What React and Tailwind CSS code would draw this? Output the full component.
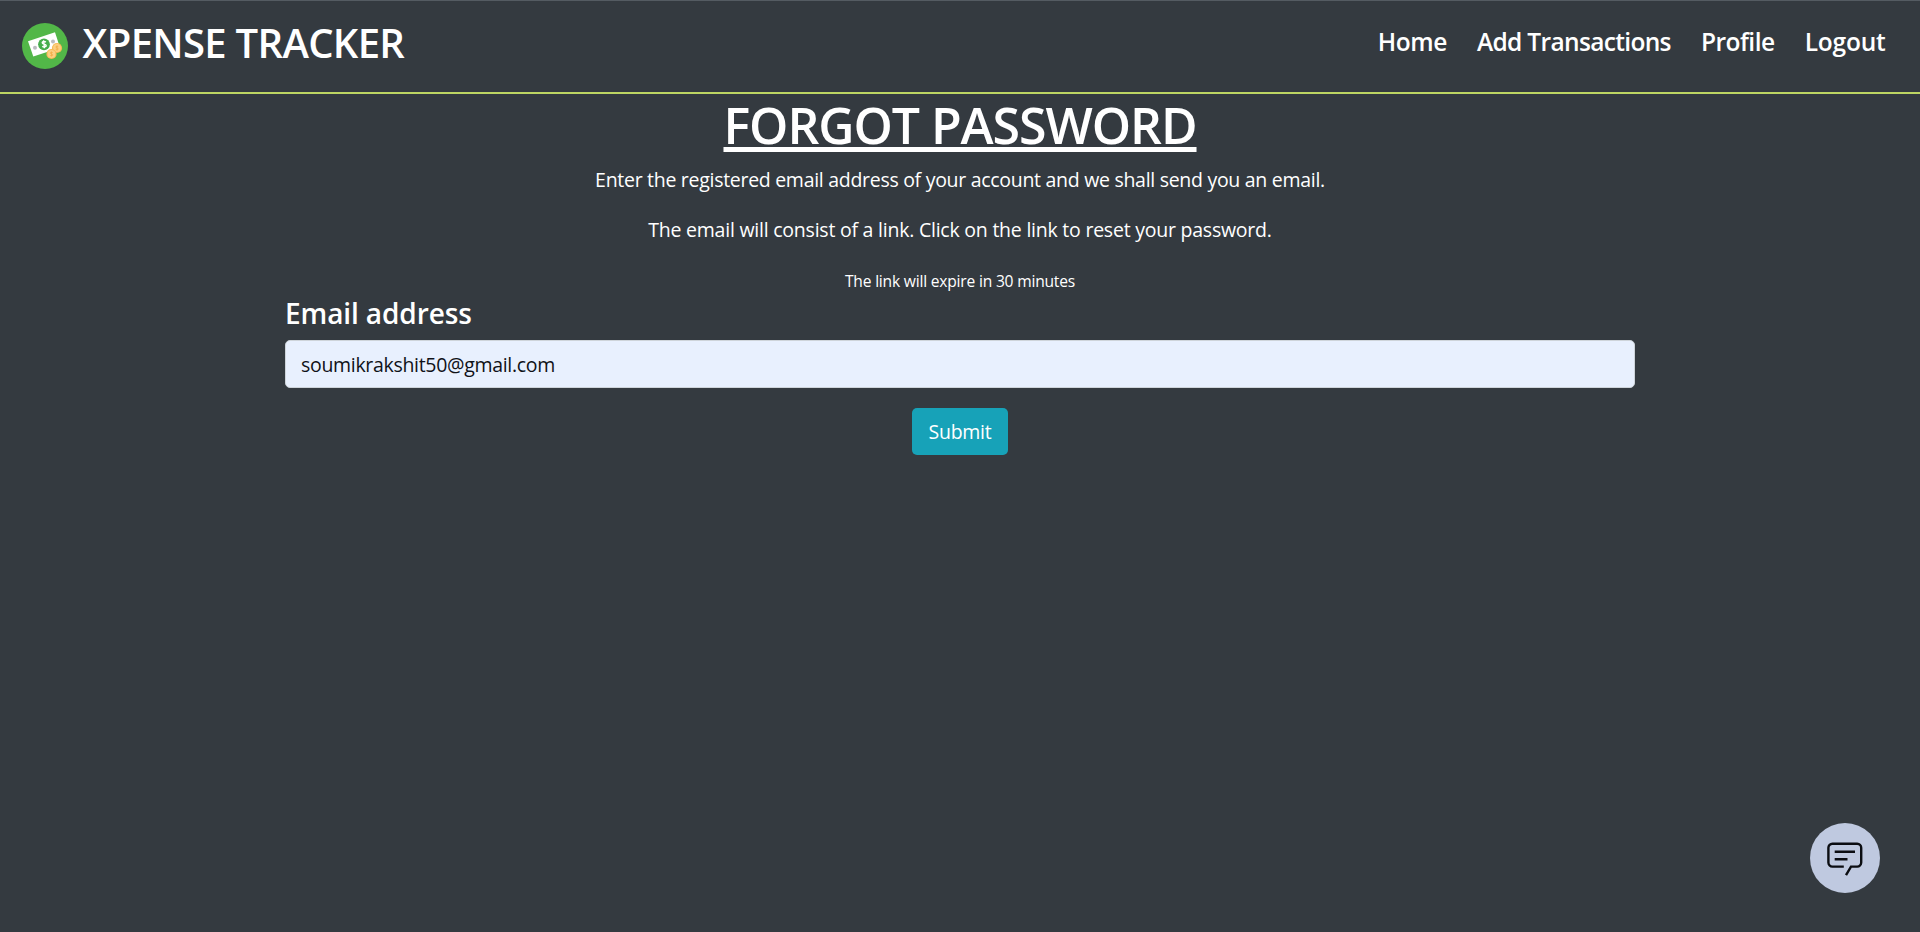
import React from "react";

const NAV = [
  { label: "Home", cls: "tracking-[-0.4px]" },
  { label: "Add Transactions", cls: "tracking-[-0.66px]" },
  { label: "Profile", cls: "tracking-[-0.5px]" },
  { label: "Logout", cls: "tracking-[-0.2px]" },
];

function Coin({ cx, cy }) {
  return (
    <g>
      <circle cx={cx} cy={cy} r="5.1" fill="#f7b955" />
      <circle cx={cx} cy={cy} r="3.9" fill="#fbd083" />
      <path
        d={`M${cx + 1.3} ${cy - 1.3}c-.8-.8-2.6-.6-2.6.3 0 1.2 2.7.8 2.7 2 0 1-2 1.1-2.8.3M${cx} ${cy - 2.4}v4.8`}
        fill="none"
        stroke="#f0a43a"
        strokeWidth="0.6"
      />
    </g>
  );
}

function Logo() {
  return (
    <svg width="46" height="46" viewBox="0 0 46 46" aria-hidden="true">
      <circle cx="23" cy="23" r="23" fill="#52b748" />
      <path d="M6 18.3 33 9.2 38 24.7 11.3 33.6Z" fill="#fff" />
      <circle cx="13" cy="24.8" r="2" fill="#b9bcc0" />
      <circle cx="31" cy="18.4" r="2" fill="#b9bcc0" />
      <circle cx="22" cy="21.3" r="5.9" fill="#45ad4c" />
      <path
        d="M23.8 19.2c-1-1.2-3.7-.8-3.6.6.1 1.8 3.8 1 4 2.8.1 1.5-2.7 1.8-3.9.6M21.6 17.3l.8 8"
        fill="none"
        stroke="#fff"
        strokeWidth="1.4"
      />
      <Coin cx={35} cy={25} />
      <Coin cx={29.5} cy={31} />
    </svg>
  );
}

function ChatIcon() {
  return (
    <svg
      width="36"
      height="34"
      viewBox="0 0 36 34"
      fill="none"
      stroke="#0b0d12"
      strokeWidth="2.4"
      className="overflow-visible"
      aria-hidden="true"
    >
      <path d="M16.800 25.600H5.400a4 4 0 0 1-4-4V6.800a4 4 0 0 1 4-4h24.800a4 4 0 0 1 4 4v14.800a4 4 0 0 1-4 4H24l-5 8.600" />
      <path d="M7.700 10.700H28M7.700 18.300H20.500" />
    </svg>
  );
}

export default function App() {
  return (
    <div className="relative flex h-[932px] w-full flex-col overflow-hidden bg-[#343a40] font-['Open_Sans','Noto_Sans',sans-serif] text-white">
      <header className="flex h-[94px] shrink-0 items-start justify-between border-t border-b-2 border-t-[#545b62] border-b-[#bdd563] pr-[34.5px] pl-[22px]">
        <div className="flex items-start pt-[11px]">
          <span className="mt-[11px] block">
            <Logo />
          </span>
          <span className="ml-[14.5px] text-[40px] leading-[61px] font-semibold tracking-[-0.68px]">XPENSE TRACKER</span>
        </div>
        <nav className="flex gap-[30px] pt-[21px] text-[24.5px] leading-10 font-semibold">
          {NAV.map((n) => (
            <a key={n.label} className={n.cls}>
              {n.label}
            </a>
          ))}
        </nav>
      </header>

      <main className="mx-auto flex w-[1350px] flex-col items-center pt-px">
        <h1 className="text-[50px] leading-[60px] font-semibold tracking-[-1.05px] underline decoration-[5px] underline-offset-[3px]">
          FORGOT PASSWORD
        </h1>
        <p className="mt-2.5 text-[19.5px] leading-[30px] tracking-[-0.29px]">
          Enter the registered email address of your account and we shall send you an email.
        </p>
        <p className="mt-5 text-[19.5px] leading-[30px] tracking-[-0.23px]">
          The email will consist of a link. Click on the link to reset your password.
        </p>
        <small className="mt-6 text-[15.6px] leading-6 tracking-[-0.2px]">The link will expire in 30 minutes</small>
        <label className="-mt-px self-start text-[28px] leading-[42px] font-semibold tracking-[-0.1px]">
          Email address
        </label>
        <div className="mt-1.5 h-12 w-full rounded-[5px] border border-[#ced4da] bg-[#e8f0fe] pl-[15px] text-[19.5px] leading-[48px] tracking-[-0.31px] text-[#101218]">
          <span>soumikrakshit50@gmail.com</span>
        </div>
        <button className="mt-5 h-[47px] w-24 rounded-[5px] bg-[#17a2b8] text-[19.5px] leading-[47px] tracking-[-0.25px]">
          Submit
        </button>
      </main>

      <button className="absolute top-[823px] left-[1810px] flex size-[70px] items-center justify-center rounded-full bg-[#bfc9e0]">
        <ChatIcon />
      </button>
    </div>
  );
}
